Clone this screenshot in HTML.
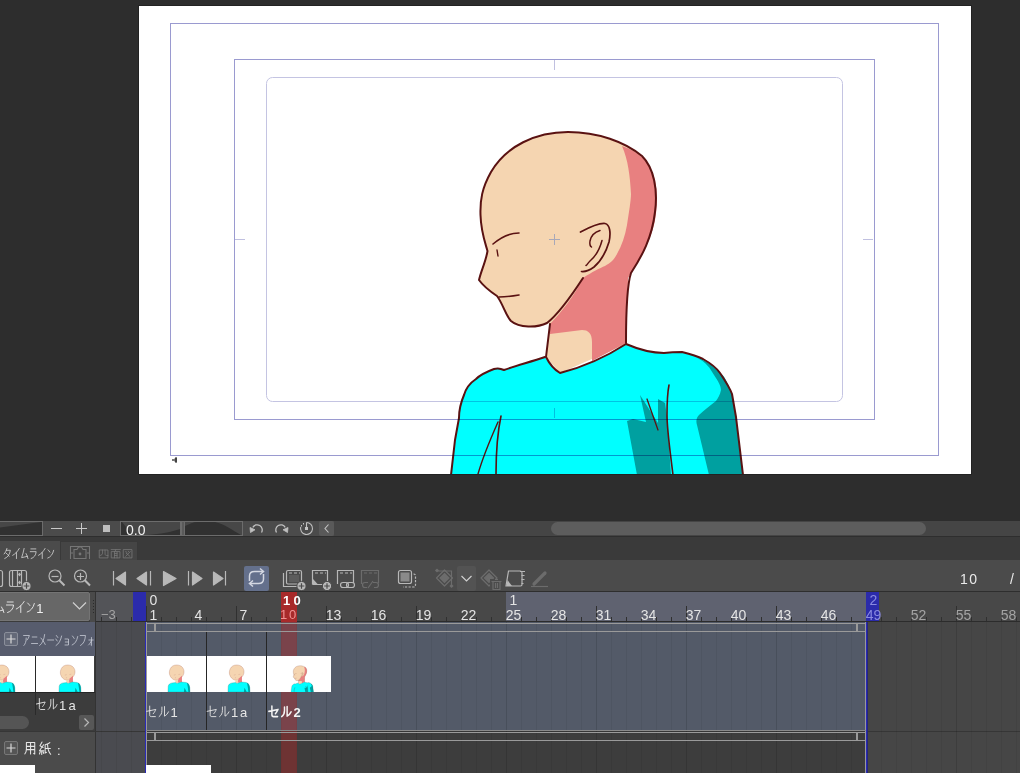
<!DOCTYPE html>
<html><head><meta charset="utf-8">
<style>
*{margin:0;padding:0;box-sizing:border-box}
html,body{width:1020px;height:773px;overflow:hidden;background:#2d2d2d;font-family:"Liberation Sans",sans-serif;color:#e6e6e6}
.a{position:absolute}
svg{position:absolute;left:0;top:0;overflow:visible}
</style></head><body>

<!-- CANVAS -->
<div class="a" style="left:139px;top:6px;width:832px;height:468px;background:#fff;box-shadow:0 0 0 1px #222"></div>
<svg width="1020" height="474" viewBox="0 0 1020 474">
<defs><clipPath id="cc"><rect x="139" y="6" width="832" height="468"/></clipPath><g id="artA">
<path fill="#f5d5b1" d="M537 123 C595 123 635 160 633 215 C632 245 615 275 590 295 C565 312 540 320 513 318 C480 310 455 280 445 245 C435 200 455 123 537 123 Z" stroke="#b07060" stroke-width="4"/>
<path fill="#e88080" d="M565 300 L606 262 L606 345 L580 355 L545 350 Z"/>
<path fill="#f5d5b1" d="M518 316 L552 314 L558 345 L535 360 L520 345 Z"/>
<path fill="#00ffff" d="M425 474 L428 400 C432 375 450 360 480 356 L525 352 L540 362 L600 345 L660 350 C690 360 705 385 708 420 L711 474 Z" stroke="#308080" stroke-width="4"/>
<path fill="#00a0a0" d="M672 354 C697 364 705 390 708 420 L711 474 L690 474 L682 410 Z M640 420 L668 474 L632 474 Z"/>
<path d="M500 255 L525 248 M560 248 L585 242 M515 290 L530 288" stroke="#c09080" stroke-width="4" fill="none"/>
</g></defs>
<g clip-path="url(#cc)" id="art">
<!-- skin head + neck -->
<path fill="#f5d5b1" d="M568 132 C536 132 506 146 491 172 C482 188 480 200 480.5 215 C481 232 485 242 487.5 251 C486 261 481 271 479 280 C484 287 491 292 497 296 C503 304 506 316 511 321 C519 328 537 328 547 323 L550 324 L546 357 L560 373 L626 344 L628 278 C640 258 652 238 655 212 C658 185 650 162 640 154 C620 140 598 132 568 132 Z"/>
<!-- pink shadow -->
<path fill="#e88080" d="M622 146 C640 152 650 162 655 180 C658 195 657 212 654 225 C648 248 636 264 628 278 L626 343 L592 361 L592 342 C592 333 588 330 582 330 L550 334 L550 324 C560 314 575 295 583 278 C592 272 600 268 605 266 C610 263 614 260 617 254 C622 245 625 236 627 225 C629 212 631 200 631 194 C630 175 628 160 622 146 Z"/>
<!-- shirt -->
<path fill="#00ffff" d="M451 475 L455 440 L459 418 C459 410 461 402 464 395 C466 388 470 383 476 379 C480 375 486 372 494 369 C497 368 500 368 504 370 C515 366 530 362 545 357 C549 363 555 370 560 373 Q595 364 626 344 C640 350 652 353 664 353 C672 352 678 352 682 352 C690 354 697 356 703 359 C710 363 716 367 720 373 C726 382 730 388 732 394 L736 417 L743 475 Z"/>
<!-- shirt shadows -->
<path fill="#00a0a0" d="M697 358 C706 362 710 368 714 375 C718 381 721 386 721 390 C720 395 718 398 716 401 C710 406 704 410 699 415 C696 418 696 422 697 425 L709 475 L743 475 L736 417 L732 394 C728 383 724 375 720 373 C712 364 704 360 697 358 Z"/>
<path fill="#00a0a0" d="M627 421 L633 419 L646 422 L640 395 L658 423 L658 399 L665 403 L667 417 L671 475 L637 475 Z"/>
<!-- outlines -->
<g fill="none" stroke="#5a1212" stroke-width="2" stroke-linecap="round" stroke-linejoin="round">
<path d="M583 278 C570 298 556 316 547 323 C537 328 519 328 511 321 C506 316 503 304 497 296 C491 292 484 287 479 280 C481 271 486 261 487.5 251 C485 242 481 232 480.5 215 C480 200 482 188 491 172 C506 146 536 132 568 132 C598 132 625 142 642 156 C654 168 658 190 655 212 C652 238 642 256 631 273 C627 285 626 310 626 343"/>
<path d="M550 324 L546 357 C549 363 555 370 560 373 Q595 364 626 344 C640 350 652 353 664 353 C672 352 678 352 682 352 C690 354 697 356 703 359 C710 363 716 367 720 373 C726 382 730 388 732 394 L736 417 L743 475"/>
<path d="M545 357 C530 362 515 366 504 370 C500 368 497 368 494 369 C486 372 480 375 476 379 C470 383 466 388 464 395 C461 402 459 410 459 418 L455 440 L451 475"/>
<path d="M580.5 232 C590 227 600 223 605 223.5 C610 224.5 611 233 609 242 C606 252 601 261 594 267 C590 270 586 272 581.5 271.5" stroke-width="1.7"/>
<path d="M600 230.5 C595 232 591 236 590 241 C589.5 244 590 246 591.5 247" stroke-width="1.5"/>
<path d="M602 240.5 C600 248 596 256 590 261 C588 263 587 265 586 265.5" stroke-width="1.5"/>
<path d="M493 244 C500 238 510 233 519 233" stroke-width="1.6"/>
<path d="M497 250 L498 256" stroke-width="1.4"/>
<path d="M499 297 C506 297 513 296 519 295" stroke-width="1.6"/>
<path d="M669 385 C667 395 667 405 667 415 C667 430 670 450 673 475" stroke-width="1.6"/>
<path d="M647 399 L658 430" stroke-width="1.3"/>
<path d="M501 416 C498 430 496 450 496 475" stroke-width="1.6"/>
<path d="M498 422 C490 440 482 460 478 474" stroke-width="1.4"/>
</g>
</g>
<g>
<!-- guides -->
<g fill="none" stroke="#9a9ad0" stroke-width="1" shape-rendering="crispEdges" style="mix-blend-mode:multiply">
<rect x="170.5" y="23.5" width="768" height="432"/>
<rect x="234.5" y="59.5" width="640" height="360"/>

</g>
<path d="M554.5 60 V70 M554.5 408 V418 M235 239.5 H245 M863 239.5 H873" stroke="#c0c0e0" fill="none" style="mix-blend-mode:multiply"/>
<rect x="266.5" y="77.5" width="576" height="324" rx="6" fill="none" stroke="#c4c4e2" stroke-width="1" style="mix-blend-mode:multiply"/>
<path d="M549 239.5 H560 M554.5 234 V245" stroke="#a8a8b8" stroke-width="1" fill="none"/>
<path d="M172 459 H174 L176.5 457 V463 L174 461 H172 Z" fill="#777"/><rect x="175" y="457.5" width="2" height="5" fill="#444"/>
</g>
</svg>


<div class="a" style="left:0px;top:521px;width:1020px;height:15px;background:#4b4b4b"></div>
<div class="a" style="left:-2px;top:521px;width:45px;height:15px;background:#313131;border:1px solid #6c6c6c"></div>
<svg width="1020" height="773" ><path d="M0 527.5 L41 522 L0 522Z" fill="#474747"/></svg>
<svg width="1020" height="773" ><path d="M51 528.5 H62 M76 528.5 H87 M81.5 523 V534" stroke="#c8c8c8" stroke-width="1"/><rect x="103" y="525" width="7" height="7" fill="#bdbdbd"/></svg>
<div class="a" style="left:120px;top:521px;width:61px;height:15px;background:#474747;border:1px solid #6c6c6c"></div>
<svg width="1020" height="773" ><path d="M121 522 L122 522 L132.5 535 L121 535 Z M148 535 C160 534 172 532 180 529 L180 535 Z" fill="#313131"/></svg>
<div class="a" style="left:126px;top:523px;white-space:nowrap;font-size:14px;line-height:15px;color:#f2f2f2">0.0</div>
<div class="a" style="left:181px;top:521px;width:4px;height:15px;background:#5a5a5a;border:1px solid #6c6c6c"></div>
<div class="a" style="left:184px;top:521px;width:59px;height:15px;background:#474747;border:1px solid #6c6c6c"></div>
<svg width="1020" height="773" ><path d="M185 535 L185 526 C190 524 193 522 197 522 L215 522 C225 524 232 530 241 535 Z" fill="#313131"/></svg>
<svg width="1020" height="773" ><g fill="none" stroke="#c0c0c0" stroke-width="1.2"><path d="M261.5 532.5 A5 5 0 1 0 252.8 527.3" stroke-width="1.3"/><path d="M250.5 532.5 L250 527.5 L255 529.8Z" fill="#c0c0c0" stroke-width="0.8"/><path d="M276.5 532.5 A5 5 0 1 1 285.2 527.3" stroke-width="1.3"/><path d="M287.5 532.5 L288 527.5 L283 529.8Z" fill="#c0c0c0" stroke-width="0.8"/><path d="M306.5 522.5 A6 6 0 1 1 300.7 527" stroke-width="1.1"/><path d="M306.5 522.5 V527" stroke-width="1.1"/></g><rect x="305" y="527" width="3" height="3" fill="#c4c4c4"/><rect x="301" y="525" width="1" height="1.5" fill="#c4c4c4"/><rect x="303" y="523" width="1" height="1.5" fill="#c4c4c4"/></svg>
<div class="a" style="left:319px;top:521px;width:15px;height:15px;background:#595959;border-radius:2px"></div>
<svg width="1020" height="773" ><path d="M328.5 524.5 L325 528.5 L328.5 532.5" fill="none" stroke="#c4c4c4" stroke-width="1.1"/></svg>
<div class="a" style="left:334px;top:521px;width:686px;height:15px;background:#454545"></div>
<div class="a" style="left:551px;top:522px;width:375px;height:13px;background:#5d5d5d;border-radius:7px"></div>
<div class="a" style="left:0px;top:536px;width:1020px;height:1px;background:#2e2e2e"></div>
<div class="a" style="left:0px;top:537px;width:1020px;height:23px;background:#3a3a3a"></div>
<div class="a" style="left:0px;top:541px;width:60px;height:19px;background:#4b4b4b"></div>
<div class="a" style="left:60px;top:541px;width:78px;height:19px;background:#454545;border:1px solid #393939;border-bottom:none"></div>
<svg width="1020" height="773"><g fill="none" stroke="#dcdcdc" stroke-width="1.0" stroke-linecap="round" stroke-linejoin="round"><path transform="translate(3.80 548) scale(0.6250 0.9167)" d="M5 0.5 C4 3 2.5 5 0.5 6.5 M4 2.5 H10.5 C9.5 7 6.5 10 1.5 11.5 M3.5 5.5 C5.5 6.5 7 7.5 8.5 9"/><path transform="translate(12.40 548) scale(0.6250 0.9167)" d="M11 0.5 C8 4 4.5 6.5 0.5 8 M6.5 5 V11.5"/><path transform="translate(21.00 548) scale(0.6250 0.9167)" d="M5 0.5 C4 4 2.5 7.5 1 10.5 C4.5 10 8 9.5 10.5 9 M8 6 C9 7.5 10.5 9.5 11.2 11.5"/><path transform="translate(29.60 548) scale(0.6250 0.9167)" d="M2 1 H10 M1 4 H10.5 C10 8 7 10.5 2.5 11.5"/><path transform="translate(38.20 548) scale(0.6250 0.9167)" d="M11 0.5 C8 4 4.5 6.5 0.5 8 M6.5 5 V11.5"/><path transform="translate(46.80 548) scale(0.6250 0.9167)" d="M2 2 C3 2.8 4 3.5 5 4.5 M1.5 11 C6 10 9.5 7 11 2.5"/></g></svg>
<svg width="1020" height="773" ><g fill="none" stroke="#767676" stroke-width="1.1"><path d="M70.5 559 V546.5 H89.5 V559 M70.5 553 H73 M87 553 H89.5"/><path d="M74 558.5 V549.5 H77 L78.5 547 H81.5 L83 549.5 H86 V558.5 Z"/></g><circle cx="80" cy="554" r="1.4" fill="#767676"/></svg>
<svg width="1020" height="773"><g fill="none" stroke="#777777" stroke-width="1.0" stroke-linecap="round" stroke-linejoin="round"><path transform="translate(98.80 548.8) scale(0.8333 0.7917)" d="M1 1.5 H11 V11.5 H1 Z M4.5 1.5 V5.5 C4.5 7 3.5 8 1.5 8.5 M7.5 1.5 V7 C7.5 8 8.5 8.5 11 8.5"/><path transform="translate(110.80 548.8) scale(0.8333 0.7917)" d="M0.5 1 H11.5 M6 1 L5 3.5 M1 3.5 H11 V11.5 H1 Z M4.5 3.5 V11.5 M7.5 3.5 V11.5 M4.5 6 H7.5 M4.5 8.5 H7.5"/><path transform="translate(122.80 548.8) scale(0.8333 0.7917)" d="M1 1 H11 V11.5 H1 Z M3.5 3.5 L5 4.5 M6.5 3 L7.5 4 M3.5 9.5 L9 3.5 M4 5.5 L8.5 9.5"/></g></svg>
<div class="a" style="left:0px;top:560px;width:1020px;height:31px;background:#4b4b4b"></div>
<svg width="1020" height="773" ><g fill="none" stroke="#b8b8b8" stroke-width="1.2"><rect x="-6.5" y="570.5" width="9" height="16" rx="2"/><rect x="9.5" y="570.5" width="17" height="16" rx="2"/><path d="M12.5 571 V586 M17.5 571 V586 M21.5 571 V586"/><path d="M19.5 572.5 L21 574.5 L19.5 576.5 L18 574.5Z M19.5 580.5 L21 582.5 L19.5 584.5 L18 582.5Z" fill="#b8b8b8" stroke="none"/><circle cx="26.5" cy="586" r="4.6" fill="#b8b8b8" stroke="#4b4b4b" stroke-width="1"/><path d="M23.7 586 H29.3 M26.5 583.2 V588.8" stroke="#4b4b4b" stroke-width="1.2"/><circle cx="55" cy="576" r="6"/><path d="M59.3 580.3 L64.5 585.5" stroke-width="2"/><path d="M51.5 576.5 H58.5"/><circle cx="80.5" cy="576" r="6"/><path d="M84.8 580.3 L90 585.5" stroke-width="2"/><path d="M77 576.5 H84 M80.5 573 V580"/></g></svg>
<svg width="1020" height="773" ><g fill="#b8b8b8" stroke="#b8b8b8" stroke-width="1.2" stroke-linejoin="round"><path d="M113.5 571 V585.5" fill="none"/><path d="M125.5 572 L116 578.5 L125.5 585 Z"/><path d="M150.5 571 V585.5" fill="none"/><path d="M146.5 572 L137 578.5 L146.5 585 Z"/><path d="M163.5 571.5 L176 578.5 L163.5 585.5 Z"/><path d="M188.5 571 V585.5" fill="none"/><path d="M192.5 572 L202 578.5 L192.5 585 Z"/><path d="M225.5 571 V585.5" fill="none"/><path d="M213.5 572 L223 578.5 L213.5 585 Z"/></g></svg>
<div class="a" style="left:244px;top:566px;width:25px;height:25px;background:#64708c;border-radius:2px"></div>
<svg width="1020" height="773" ><g fill="none" stroke="#d4d8e2" stroke-width="1.5"><path d="M249.5 581 V576 C249.5 573 251.5 571.5 254.5 571.5 H263"/><path d="M260 568.5 L263.5 571.5 L260 574.5"/><path d="M263.5 574 V579 C263.5 582 261.5 583.5 258.5 583.5 H250"/><path d="M253 580.5 L249.5 583.5 L253 586.5"/></g></svg>
<svg width="1020" height="773" ><g fill="none" stroke="#b8b8b8" stroke-width="1.2"><path d="M283.5 573 V586.5 H298"/><rect x="286.5" y="570.5" width="15" height="13.5" rx="1.5"/><rect x="289" y="575" width="10" height="7" fill="#5c5c5c" stroke="none"/><path d="M289 573 H292 M294 573 H297 M299 573 H300" stroke-width="1"/><circle cx="301.5" cy="586" r="4.6" fill="#b8b8b8" stroke="#4b4b4b" stroke-width="1"/><path d="M298.7 586 H304.3 M301.5 583.2 V588.8" stroke="#4b4b4b" stroke-width="1.2"/><path d="M312.5 584.5 V570.5 H327.5 V581 M312.5 584.5 H322"/><path d="M313 579 L318 584.5 H313Z" fill="#b8b8b8" stroke="none"/><path d="M315 573 H318 M320 573 H323 M325 573 H326" stroke-width="1"/><circle cx="327" cy="586" r="4.6" fill="#b8b8b8" stroke="#4b4b4b" stroke-width="1"/><path d="M324.2 586 H329.8 M327 583.2 V588.8" stroke="#4b4b4b" stroke-width="1.2"/><path d="M337.5 584 V570.5 H353.5 V583"/><path d="M340 573 H343 M345 573 H348 M350 573 H352" stroke-width="1"/><rect x="340.5" y="582.5" width="8" height="5" rx="2.5"/><rect x="346.5" y="582.5" width="8" height="5" rx="2.5"/></g><g fill="none" stroke="#6c6c6c" stroke-width="1.2"><path d="M361.5 584 V570.5 H378.5 V583"/><path d="M364 573 H367 M369 573 H372 M374 573 H377" stroke-width="1"/><path d="M368 582.5 H365 C363 582.5 362.5 584 362.5 585 C362.5 586 363 587.5 365 587.5 H367 M373 582.5 H376 C378 582.5 378.5 584 378.5 585 C378.5 586 378 587.5 376 587.5 H374 M368 588 L373 581"/></g><g fill="none" stroke="#b8b8b8" stroke-width="1.2"><rect x="398.5" y="570.5" width="13" height="13" rx="2"/><rect x="400.5" y="572.5" width="9" height="9" fill="#8a8a8a" stroke="none"/><path d="M413.5 574 C415 574 415.5 575 415.5 576 V585 C415.5 586 415 587 413.5 587 H403" stroke-dasharray="2.2 1.4"/></g><g fill="none" stroke="#6c6c6c" stroke-width="1.2"><path d="M444.5 570 L452.5 578 L444.5 586 L436.5 578 Z" stroke-linejoin="round"/><path d="M444.5 573.5 L449 578 L444.5 582.5 L440 578 Z" fill="#6c6c6c"/><path d="M437.5 571 H451.5 V585"/></g><rect x="435.5" y="569" width="3" height="3" fill="#6c6c6c" transform="rotate(45 437 570.5)"/><rect x="450" y="584.5" width="3" height="3" fill="#6c6c6c" transform="rotate(45 451.5 586)"/></svg>
<div class="a" style="left:457px;top:566px;width:19px;height:25px;background:#535353;border-radius:2px"></div>
<svg width="1020" height="773" ><path d="M461.5 576 L466.5 581 L471.5 576" fill="none" stroke="#d0d0d0" stroke-width="1.2"/><g fill="none" stroke="#6c6c6c" stroke-width="1.2"><path d="M489 570 L497 578 L489 586 L481 578 Z" stroke-linejoin="round"/><path d="M489 573.5 L493.5 578 L489 582.5 L484.5 578 Z" fill="#6c6c6c"/></g><rect x="490" y="579" width="13" height="12" fill="#4b4b4b"/><g fill="none" stroke="#6c6c6c" stroke-width="1.2"><path d="M491.5 581.5 H501.5 M493 581.5 V589.5 H500 V581.5 M495 579.5 H498 M495.5 583 V588 M497.5 583 V588"/></g><g fill="none" stroke="#b8b8b8" stroke-width="1.2"><path d="M508.5 571 H520.5 C521.5 571 522 572 522 573 V584.5 C522 585.5 521.5 586 520.5 586 H506 L508.5 571 Z"/><path d="M506.5 586 L507.5 580 L512 586 Z" fill="#b8b8b8" stroke="none"/><path d="M520 571.5 H525 M521.5 575.5 H524.5 M521.5 579.5 H524.5 M521.5 583.5 H523.5"/></g><g stroke="#6c6c6c" fill="none"><path d="M531 586.5 H548" stroke-width="1.2"/><path d="M534 584 L545 573" stroke-width="3.2" stroke-linecap="round"/></g></svg>
<div class="a" style="left:960px;top:571px;white-space:nowrap;font-size:14px;line-height:16px;color:#eaeaea;letter-spacing:1.5px">10</div>
<div class="a" style="left:1010px;top:571px;white-space:nowrap;font-size:14px;line-height:16px;color:#eaeaea">/</div>
<div class="a" style="left:0px;top:591px;width:1020px;height:1px;background:#2e2e2e"></div>
<div class="a" style="left:0px;top:592px;width:91px;height:30px;background:#3b3b3b"></div>
<div class="a" style="left:-4px;top:592px;width:94px;height:29px;background:#676767;border:1px solid #747474;border-radius:2px"></div>
<svg width="1020" height="773"><defs><clipPath id="cdd"><rect x="0" y="592" width="90" height="30"/></clipPath></defs><g clip-path="url(#cdd)" fill="none" stroke="#f0f0f0" stroke-width="1.0" stroke-linecap="round" stroke-linejoin="round"><g style="vector-effect:non-scaling-stroke"><path transform="translate(-4.50 601) scale(0.7500 1.0000)" d="M5 0.5 C4 4 2.5 7.5 1 10.5 C4.5 10 8 9.5 10.5 9 M8 6 C9 7.5 10.5 9.5 11.2 11.5"/><path transform="translate(5.70 601) scale(0.7500 1.0000)" d="M2 1 H10 M1 4 H10.5 C10 8 7 10.5 2.5 11.5"/><path transform="translate(15.90 601) scale(0.7500 1.0000)" d="M11 0.5 C8 4 4.5 6.5 0.5 8 M6.5 5 V11.5"/><path transform="translate(26.10 601) scale(0.7500 1.0000)" d="M2 2 C3 2.8 4 3.5 5 4.5 M1.5 11 C6 10 9.5 7 11 2.5"/><text x="36.30" y="613" font-size="13" fill="#f0f0f0" stroke="none" font-family="Liberation Sans" font-weight="normal">1</text></g></g></svg>
<svg width="1020" height="773" ><path d="M73 602.5 L79.5 609 L86 602.5" fill="none" stroke="#d0d0d0" stroke-width="1.2"/></svg>
<div class="a" style="left:90px;top:592px;width:6px;height:181px;background:#4a4a4a"></div>
<svg width="1020" height="773" ><rect x="93" y="600" width="1" height="1" fill="#2a2a2a"/><rect x="93" y="603" width="1" height="1" fill="#2a2a2a"/><rect x="93" y="606" width="1" height="1" fill="#2a2a2a"/><rect x="93" y="609" width="1" height="1" fill="#2a2a2a"/><rect x="93" y="612" width="1" height="1" fill="#2a2a2a"/></svg>
<div class="a" style="left:95px;top:592px;width:1px;height:181px;background:#333"></div>
<div class="a" style="left:96px;top:592px;width:924px;height:29px;background:#484848"></div>
<div class="a" style="left:506px;top:592px;width:360px;height:29px;background:#5f6270"></div>
<div class="a" style="left:96px;top:592px;width:37px;height:29px;background:#535458"></div>
<div class="a" style="left:96px;top:621px;width:924px;height:1px;background:#2c2c2c"></div>
<svg width="1020" height="773" fill="#303030"><rect x="101" y="617" width="1" height="4"/><rect x="116" y="617" width="1" height="4"/><rect x="131" y="617" width="1" height="4"/><rect x="146" y="606" width="1" height="15"/><rect x="161" y="617" width="1" height="4"/><rect x="176" y="617" width="1" height="4"/><rect x="191" y="617" width="1" height="4"/><rect x="206" y="617" width="1" height="4"/><rect x="221" y="617" width="1" height="4"/><rect x="236" y="606" width="1" height="15"/><rect x="251" y="617" width="1" height="4"/><rect x="266" y="617" width="1" height="4"/><rect x="281" y="617" width="1" height="4"/><rect x="296" y="617" width="1" height="4"/><rect x="311" y="617" width="1" height="4"/><rect x="326" y="606" width="1" height="15"/><rect x="341" y="617" width="1" height="4"/><rect x="356" y="617" width="1" height="4"/><rect x="371" y="617" width="1" height="4"/><rect x="386" y="617" width="1" height="4"/><rect x="401" y="617" width="1" height="4"/><rect x="416" y="606" width="1" height="15"/><rect x="431" y="617" width="1" height="4"/><rect x="446" y="617" width="1" height="4"/><rect x="461" y="617" width="1" height="4"/><rect x="476" y="617" width="1" height="4"/><rect x="491" y="617" width="1" height="4"/><rect x="521" y="617" width="1" height="4"/><rect x="536" y="617" width="1" height="4"/><rect x="551" y="617" width="1" height="4"/><rect x="566" y="617" width="1" height="4"/><rect x="581" y="617" width="1" height="4"/><rect x="596" y="606" width="1" height="15"/><rect x="611" y="617" width="1" height="4"/><rect x="626" y="617" width="1" height="4"/><rect x="641" y="617" width="1" height="4"/><rect x="656" y="617" width="1" height="4"/><rect x="671" y="617" width="1" height="4"/><rect x="686" y="606" width="1" height="15"/><rect x="701" y="617" width="1" height="4"/><rect x="716" y="617" width="1" height="4"/><rect x="731" y="617" width="1" height="4"/><rect x="746" y="617" width="1" height="4"/><rect x="761" y="617" width="1" height="4"/><rect x="776" y="606" width="1" height="15"/><rect x="791" y="617" width="1" height="4"/><rect x="806" y="617" width="1" height="4"/><rect x="821" y="617" width="1" height="4"/><rect x="836" y="617" width="1" height="4"/><rect x="851" y="617" width="1" height="4"/><rect x="866" y="606" width="1" height="15"/><rect x="881" y="617" width="1" height="4"/><rect x="896" y="617" width="1" height="4"/><rect x="911" y="617" width="1" height="4"/><rect x="926" y="617" width="1" height="4"/><rect x="941" y="617" width="1" height="4"/><rect x="956" y="606" width="1" height="15"/><rect x="971" y="617" width="1" height="4"/><rect x="986" y="617" width="1" height="4"/><rect x="1001" y="617" width="1" height="4"/><rect x="1016" y="617" width="1" height="4"/></svg>
<div class="a" style="left:133px;top:592px;width:13px;height:29px;background:#2b2bab"></div>
<div class="a" style="left:866px;top:592px;width:13px;height:29px;background:#2b2bab"></div>
<div class="a" style="left:281px;top:592px;width:16px;height:30px;background:#a82a2a"></div>
<div class="a" style="left:136px;top:608px;width:35px;text-align:center;font-size:14px;line-height:14px;color:#e4e4e4;">1</div>
<div class="a" style="left:181px;top:608px;width:35px;text-align:center;font-size:14px;line-height:14px;color:#e4e4e4;">4</div>
<div class="a" style="left:226px;top:608px;width:35px;text-align:center;font-size:14px;line-height:14px;color:#e4e4e4;">7</div>
<div class="a" style="left:280px;top:608px;white-space:nowrap;font-size:13px;line-height:14px;color:#f09090;letter-spacing:1.8px">10</div>
<div class="a" style="left:316px;top:608px;width:35px;text-align:center;font-size:14px;line-height:14px;color:#e4e4e4;">13</div>
<div class="a" style="left:361px;top:608px;width:35px;text-align:center;font-size:14px;line-height:14px;color:#e4e4e4;">16</div>
<div class="a" style="left:406px;top:608px;width:35px;text-align:center;font-size:14px;line-height:14px;color:#e4e4e4;">19</div>
<div class="a" style="left:451px;top:608px;width:35px;text-align:center;font-size:14px;line-height:14px;color:#e4e4e4;">22</div>
<div class="a" style="left:496px;top:608px;width:35px;text-align:center;font-size:14px;line-height:14px;color:#e4e4e4;">25</div>
<div class="a" style="left:541px;top:608px;width:35px;text-align:center;font-size:14px;line-height:14px;color:#e4e4e4;">28</div>
<div class="a" style="left:586px;top:608px;width:35px;text-align:center;font-size:14px;line-height:14px;color:#e4e4e4;">31</div>
<div class="a" style="left:631px;top:608px;width:35px;text-align:center;font-size:14px;line-height:14px;color:#e4e4e4;">34</div>
<div class="a" style="left:676px;top:608px;width:35px;text-align:center;font-size:14px;line-height:14px;color:#e4e4e4;">37</div>
<div class="a" style="left:721px;top:608px;width:35px;text-align:center;font-size:14px;line-height:14px;color:#e4e4e4;">40</div>
<div class="a" style="left:766px;top:608px;width:35px;text-align:center;font-size:14px;line-height:14px;color:#e4e4e4;">43</div>
<div class="a" style="left:811px;top:608px;width:35px;text-align:center;font-size:14px;line-height:14px;color:#e4e4e4;">46</div>
<div class="a" style="left:856px;top:608px;width:35px;text-align:center;font-size:14px;line-height:14px;color:#8a8ae0;">49</div>
<div class="a" style="left:901px;top:608px;width:35px;text-align:center;font-size:14px;line-height:14px;color:#a4a4a4;">52</div>
<div class="a" style="left:946px;top:608px;width:35px;text-align:center;font-size:14px;line-height:14px;color:#a4a4a4;">55</div>
<div class="a" style="left:991px;top:608px;width:35px;text-align:center;font-size:14px;line-height:14px;color:#a4a4a4;">58</div>
<div class="a" style="left:101px;top:608px;white-space:nowrap;font-size:13px;line-height:14px;color:#a4a4a4">&minus;3</div>
<div class="a" style="left:136px;top:593px;width:35px;text-align:center;font-size:14px;line-height:14px;color:#e4e4e4;">0</div>
<div class="a" style="left:283px;top:594px;white-space:nowrap;font-size:13px;line-height:14px;color:#ffffff;font-weight:bold;letter-spacing:3.3px">10</div>
<div class="a" style="left:496px;top:593px;width:35px;text-align:center;font-size:14px;line-height:14px;color:#e4e4e4;">1</div>
<div class="a" style="left:856px;top:593px;width:35px;text-align:center;font-size:14px;line-height:14px;color:#8a8ae0;">2</div>
<div class="a" style="left:0px;top:622px;width:95px;height:109px;background:#3c3c3c"></div>
<div class="a" style="left:0px;top:622px;width:95px;height:34px;background:#575c6d"></div>
<div class="a" style="left:4px;top:632px;width:14px;height:14px;border:1px solid #8a8e9a;background:#646978;border-radius:2px"></div>
<svg width="1020" height="773" ><path d="M6.5 639 H15.5 M11 634.5 V643.5" stroke="#d8d8d8" stroke-width="1.2"/></svg>
<svg width="1020" height="773"><defs><clipPath id="cfo"><rect x="0" y="622" width="95" height="34"/></clipPath></defs><g clip-path="url(#cfo)" fill="none" stroke="#c8ccd6" stroke-width="1.0" stroke-linecap="round" stroke-linejoin="round"><g style="vector-effect:non-scaling-stroke"><path transform="translate(23.00 634) scale(0.5833 1.0000)" d="M1 1.5 H11 C10 3.5 8.5 5 7 6 M5.5 4 C5.5 7.5 4 10 1.5 11.5"/><path transform="translate(31.05 634) scale(0.5833 1.0000)" d="M2 3 H10 M0.8 9.5 H11.2"/><path transform="translate(39.10 634) scale(0.5833 1.0000)" d="M9.5 0.5 C8.5 5.5 5.5 9.5 1 11.5 M3 4 C5.5 5.5 8.5 8 10.5 10.5"/><path transform="translate(47.15 634) scale(0.5833 1.0000)" d="M0.8 6 H11.2"/><path transform="translate(55.20 634) scale(0.5833 1.0000)" d="M2 1.5 L4.5 3.5 M1 5 L3.5 7 M1.5 11.5 C6 10 9.5 6.5 11 2"/><path transform="translate(63.25 634) scale(0.5833 1.0000)" d="M3 5 H9 V11 H3 M3.5 8 H9"/><path transform="translate(71.30 634) scale(0.5833 1.0000)" d="M2 2 C3 2.8 4 3.5 5 4.5 M1.5 11 C6 10 9.5 7 11 2.5"/><path transform="translate(79.35 634) scale(0.5833 1.0000)" d="M1.5 1.5 H10.5 C10 6.5 7 10 2 11.5"/><path transform="translate(87.40 634) scale(0.5833 1.0000)" d="M2.5 6 H10 M7 3.5 V11.5 C7 11.7 6.5 11.5 6 11.2 M7 6.5 C5.5 8.5 4 10 2 11"/><path transform="translate(95.45 634) scale(0.5833 1.0000)" d="M4 1.5 V5 C4 8 3 10 0.8 11.5 M7 1 V11 C9 10 10.5 8.5 11.5 6.5"/><text x="103.50" y="646" font-size="13" fill="#c8ccd6" stroke="none" font-family="Liberation Sans" font-weight="normal">ダ</text><path transform="translate(110.50 634) scale(0.5833 1.0000)" d="M0.8 6 H11.2"/></g></g></svg>
<div class="a" style="left:0;top:656px;width:35px;height:36px;background:#fff;overflow:hidden"><svg width="64" height="36" style="left:-29px" viewBox="139 6 832 468"><use href="#artA"/></svg></div>
<div class="a" style="left:36px;top:656px;width:58px;height:36px;background:#fff;overflow:hidden"><svg width="64" height="36" style="left:1px" viewBox="139 6 832 468"><use href="#artA"/></svg></div>
<div class="a" style="left:35px;top:656px;width:1px;height:59px;background:#2a2a2a"></div>
<div class="a" style="left:0px;top:692px;width:95px;height:1px;background:#262626"></div>
<svg width="1020" height="773"><g fill="none" stroke="#e6e6e6" stroke-width="1.0" stroke-linecap="round" stroke-linejoin="round"><path transform="translate(36.00 698) scale(0.8333 1.0000)" d="M0.5 6 L11 4 C10 6 9.5 7 8 8.5 M4 0.5 V9.5 C4 11 4.5 11.5 6 11.5 H10.5"/><path transform="translate(47.50 698) scale(0.8333 1.0000)" d="M4 1.5 V5 C4 8 3 10 0.8 11.5 M7 1 V11 C9 10 10.5 8.5 11.5 6.5"/><text x="59.00" y="710" font-size="13" fill="#e6e6e6" stroke="none" font-family="Liberation Sans" font-weight="normal">1</text><text x="68.50" y="710" font-size="13" fill="#e6e6e6" stroke="none" font-family="Liberation Sans" font-weight="normal">a</text></g></svg>
<div class="a" style="left:-15px;top:716px;width:44px;height:13px;background:#555;border-radius:7px"></div>
<div class="a" style="left:79px;top:715px;width:15px;height:15px;background:#575757;border-radius:2px"></div>
<svg width="1020" height="773" ><path d="M84.5 718.5 L88.5 722.5 L84.5 726.5" fill="none" stroke="#b8b8b8" stroke-width="1.2"/></svg>
<div class="a" style="left:96px;top:622px;width:50px;height:151px;background:#4a4b50"></div>
<div class="a" style="left:146px;top:622px;width:720px;height:109px;background:#535a68"></div>
<div class="a" style="left:866px;top:622px;width:154px;height:151px;background:#464646"></div>
<div class="a" style="left:0px;top:731px;width:95px;height:42px;background:#4b4b4b"></div>
<div class="a" style="left:0px;top:731px;width:1020px;height:1px;background:#363636"></div>
<div class="a" style="left:146px;top:732px;width:720px;height:41px;background:#3d3d3d"></div>
<svg width="1020" height="773" ><rect x="101" y="622" width="1" height="151" fill="rgba(0,0,0,0.05)"/><rect x="116" y="622" width="1" height="151" fill="rgba(0,0,0,0.05)"/><rect x="131" y="622" width="1" height="151" fill="rgba(0,0,0,0.05)"/><rect x="146" y="622" width="1" height="151" fill="rgba(0,0,0,0.12)"/><rect x="161" y="622" width="1" height="151" fill="rgba(0,0,0,0.05)"/><rect x="176" y="622" width="1" height="151" fill="rgba(0,0,0,0.05)"/><rect x="191" y="622" width="1" height="151" fill="rgba(0,0,0,0.05)"/><rect x="206" y="622" width="1" height="151" fill="rgba(0,0,0,0.05)"/><rect x="221" y="622" width="1" height="151" fill="rgba(0,0,0,0.05)"/><rect x="236" y="622" width="1" height="151" fill="rgba(0,0,0,0.12)"/><rect x="251" y="622" width="1" height="151" fill="rgba(0,0,0,0.05)"/><rect x="266" y="622" width="1" height="151" fill="rgba(0,0,0,0.05)"/><rect x="281" y="622" width="1" height="151" fill="rgba(0,0,0,0.05)"/><rect x="296" y="622" width="1" height="151" fill="rgba(0,0,0,0.05)"/><rect x="311" y="622" width="1" height="151" fill="rgba(0,0,0,0.05)"/><rect x="326" y="622" width="1" height="151" fill="rgba(0,0,0,0.12)"/><rect x="341" y="622" width="1" height="151" fill="rgba(0,0,0,0.05)"/><rect x="356" y="622" width="1" height="151" fill="rgba(0,0,0,0.05)"/><rect x="371" y="622" width="1" height="151" fill="rgba(0,0,0,0.05)"/><rect x="386" y="622" width="1" height="151" fill="rgba(0,0,0,0.05)"/><rect x="401" y="622" width="1" height="151" fill="rgba(0,0,0,0.05)"/><rect x="416" y="622" width="1" height="151" fill="rgba(0,0,0,0.12)"/><rect x="431" y="622" width="1" height="151" fill="rgba(0,0,0,0.05)"/><rect x="446" y="622" width="1" height="151" fill="rgba(0,0,0,0.05)"/><rect x="461" y="622" width="1" height="151" fill="rgba(0,0,0,0.05)"/><rect x="476" y="622" width="1" height="151" fill="rgba(0,0,0,0.05)"/><rect x="491" y="622" width="1" height="151" fill="rgba(0,0,0,0.05)"/><rect x="506" y="622" width="1" height="151" fill="rgba(0,0,0,0.12)"/><rect x="521" y="622" width="1" height="151" fill="rgba(0,0,0,0.05)"/><rect x="536" y="622" width="1" height="151" fill="rgba(0,0,0,0.05)"/><rect x="551" y="622" width="1" height="151" fill="rgba(0,0,0,0.05)"/><rect x="566" y="622" width="1" height="151" fill="rgba(0,0,0,0.05)"/><rect x="581" y="622" width="1" height="151" fill="rgba(0,0,0,0.05)"/><rect x="596" y="622" width="1" height="151" fill="rgba(0,0,0,0.12)"/><rect x="611" y="622" width="1" height="151" fill="rgba(0,0,0,0.05)"/><rect x="626" y="622" width="1" height="151" fill="rgba(0,0,0,0.05)"/><rect x="641" y="622" width="1" height="151" fill="rgba(0,0,0,0.05)"/><rect x="656" y="622" width="1" height="151" fill="rgba(0,0,0,0.05)"/><rect x="671" y="622" width="1" height="151" fill="rgba(0,0,0,0.05)"/><rect x="686" y="622" width="1" height="151" fill="rgba(0,0,0,0.12)"/><rect x="701" y="622" width="1" height="151" fill="rgba(0,0,0,0.05)"/><rect x="716" y="622" width="1" height="151" fill="rgba(0,0,0,0.05)"/><rect x="731" y="622" width="1" height="151" fill="rgba(0,0,0,0.05)"/><rect x="746" y="622" width="1" height="151" fill="rgba(0,0,0,0.05)"/><rect x="761" y="622" width="1" height="151" fill="rgba(0,0,0,0.05)"/><rect x="776" y="622" width="1" height="151" fill="rgba(0,0,0,0.12)"/><rect x="791" y="622" width="1" height="151" fill="rgba(0,0,0,0.05)"/><rect x="806" y="622" width="1" height="151" fill="rgba(0,0,0,0.05)"/><rect x="821" y="622" width="1" height="151" fill="rgba(0,0,0,0.05)"/><rect x="836" y="622" width="1" height="151" fill="rgba(0,0,0,0.05)"/><rect x="851" y="622" width="1" height="151" fill="rgba(0,0,0,0.05)"/><rect x="866" y="622" width="1" height="151" fill="rgba(0,0,0,0.12)"/><rect x="881" y="622" width="1" height="151" fill="rgba(0,0,0,0.05)"/><rect x="896" y="622" width="1" height="151" fill="rgba(0,0,0,0.05)"/><rect x="911" y="622" width="1" height="151" fill="rgba(0,0,0,0.05)"/><rect x="926" y="622" width="1" height="151" fill="rgba(0,0,0,0.05)"/><rect x="941" y="622" width="1" height="151" fill="rgba(0,0,0,0.05)"/><rect x="956" y="622" width="1" height="151" fill="rgba(0,0,0,0.12)"/><rect x="971" y="622" width="1" height="151" fill="rgba(0,0,0,0.05)"/><rect x="986" y="622" width="1" height="151" fill="rgba(0,0,0,0.05)"/><rect x="1001" y="622" width="1" height="151" fill="rgba(0,0,0,0.05)"/><rect x="1016" y="622" width="1" height="151" fill="rgba(0,0,0,0.05)"/></svg>
<div class="a" style="left:281px;top:622px;width:16px;height:151px;background:rgba(170,40,40,0.45)"></div>
<div class="a" style="left:146px;top:623px;width:720px;height:1px;background:#9a9a9a"></div>
<div class="a" style="left:146px;top:631px;width:720px;height:1px;background:#9a9a9a"></div>
<div class="a" style="left:154px;top:623px;width:2px;height:9px;background:#9a9a9a"></div>
<div class="a" style="left:856px;top:623px;width:2px;height:9px;background:#9a9a9a"></div>
<div class="a" style="left:146px;top:732px;width:720px;height:1px;background:#9a9a9a"></div>
<div class="a" style="left:146px;top:740px;width:720px;height:1px;background:#9a9a9a"></div>
<div class="a" style="left:154px;top:732px;width:2px;height:9px;background:#9a9a9a"></div>
<div class="a" style="left:856px;top:732px;width:2px;height:9px;background:#9a9a9a"></div>
<div class="a" style="left:146px;top:622px;width:1px;height:151px;background:#9a9a9a"></div>
<div class="a" style="left:865px;top:622px;width:1px;height:151px;background:#9a9a9a"></div>
<div class="a" style="left:146px;top:730px;width:720px;height:1px;background:#8a8a8a"></div>
<div class="a" style="left:206px;top:632px;width:1px;height:98px;background:#262626"></div>
<div class="a" style="left:266px;top:632px;width:1px;height:98px;background:#262626"></div>
<div class="a" style="left:147px;top:656px;width:59px;height:36px;background:#fff;overflow:hidden"><svg width="64" height="36" style="left:-1px" viewBox="139 6 832 468"><use href="#artA"/></svg></div>
<div class="a" style="left:207px;top:656px;width:59px;height:36px;background:#fff;overflow:hidden"><svg width="64" height="36" style="left:-1px" viewBox="139 6 832 468"><use href="#artA"/></svg></div>
<div class="a" style="left:267px;top:656px;width:64px;height:36px;background:#fff;overflow:hidden"><svg width="64" height="36" style="left:0px" viewBox="139 6 832 468"><use href="#art"/></svg></div>
<svg width="1020" height="773"><g fill="none" stroke="#e6e6e6" stroke-width="1.0" stroke-linecap="round" stroke-linejoin="round"><path transform="translate(146.20 705.6) scale(0.8750 0.9583)" d="M0.5 6 L11 4 C10 6 9.5 7 8 8.5 M4 0.5 V9.5 C4 11 4.5 11.5 6 11.5 H10.5"/><path transform="translate(158.40 705.6) scale(0.8750 0.9583)" d="M4 1.5 V5 C4 8 3 10 0.8 11.5 M7 1 V11 C9 10 10.5 8.5 11.5 6.5"/><text x="170.60" y="717.1" font-size="13" fill="#e6e6e6" stroke="none" font-family="Liberation Sans" font-weight="normal">1</text></g></svg>
<svg width="1020" height="773"><g fill="none" stroke="#e6e6e6" stroke-width="1.0" stroke-linecap="round" stroke-linejoin="round"><path transform="translate(206.70 705.6) scale(0.8750 0.9583)" d="M0.5 6 L11 4 C10 6 9.5 7 8 8.5 M4 0.5 V9.5 C4 11 4.5 11.5 6 11.5 H10.5"/><path transform="translate(218.90 705.6) scale(0.8750 0.9583)" d="M4 1.5 V5 C4 8 3 10 0.8 11.5 M7 1 V11 C9 10 10.5 8.5 11.5 6.5"/><text x="231.10" y="717.1" font-size="13" fill="#e6e6e6" stroke="none" font-family="Liberation Sans" font-weight="normal">1</text><text x="240.10" y="717.1" font-size="13" fill="#e6e6e6" stroke="none" font-family="Liberation Sans" font-weight="normal">a</text></g></svg>
<svg width="1020" height="773"><g fill="none" stroke="#f4f4f4" stroke-width="1.7" stroke-linecap="round" stroke-linejoin="round"><path transform="translate(268.40 705.6) scale(0.8750 0.9583)" d="M0.5 6 L11 4 C10 6 9.5 7 8 8.5 M4 0.5 V9.5 C4 11 4.5 11.5 6 11.5 H10.5"/><path transform="translate(281.00 705.6) scale(0.8750 0.9583)" d="M4 1.5 V5 C4 8 3 10 0.8 11.5 M7 1 V11 C9 10 10.5 8.5 11.5 6.5"/><text x="293.60" y="717.1" font-size="13" fill="#f4f4f4" stroke="none" font-family="Liberation Sans" font-weight="bold">2</text></g></svg>
<div class="a" style="left:4px;top:741px;width:14px;height:14px;border:1px solid #777;background:#555;border-radius:2px"></div>
<svg width="1020" height="773" ><path d="M6.5 748 H15.5 M11 743.5 V752.5" stroke="#d8d8d8" stroke-width="1.2"/></svg>
<svg width="1020" height="773"><g fill="none" stroke="#e6e6e6" stroke-width="1.0" stroke-linecap="round" stroke-linejoin="round"><path transform="translate(23.80 741.5) scale(1.0417 1.0833)" d="M2.5 1 V7 C2.5 9 2 10.5 1 11.5 M2.5 1 H10.5 V11.5 L9.5 11 M2.5 4.5 H10.5 M2.5 7.5 H10.5 M6.5 1 V11.5"/><path transform="translate(38.40 741.5) scale(1.0417 1.0833)" d="M3.5 0.5 L1.5 4 L4.5 5.5 M5 3 L1 8.5 H5.2 M3.2 8.5 V12 M1.8 9.5 L1 11.5 M4.5 9.5 L5.2 11 M6.5 3 V10.5 L7.8 10 M6.5 3 C8.5 2.5 10 2 11 1 M6.5 6.5 H11.5 M8.8 3 C9 7 10 10 11.8 11.8"/><text x="57.00" y="754.5" font-size="13" fill="#e6e6e6" stroke="none" font-family="Liberation Sans" font-weight="normal">:</text></g></svg>
<div class="a" style="left:0px;top:765px;width:35px;height:8px;background:#fff"></div>
<div class="a" style="left:146px;top:765px;width:65px;height:8px;background:#fff"></div>
<div class="a" style="left:145px;top:622px;width:1px;height:151px;background:#2a2ab8"></div>
<div class="a" style="left:866px;top:622px;width:1px;height:151px;background:#2a2ab8"></div>
<div class="a" style="left:867px;top:622px;width:1px;height:151px;background:#25257a"></div>
</body></html>
